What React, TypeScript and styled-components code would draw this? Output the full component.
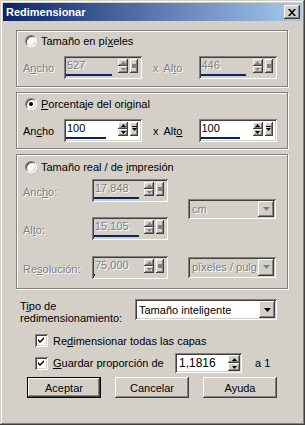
import React from 'react';
import styled, { createGlobalStyle, css } from 'styled-components';

const GlobalStyle = createGlobalStyle`
  html, body { margin: 0; padding: 0; background: #D4D0C8; }
  body { font-family: "Liberation Sans", Arial, sans-serif; font-size: 11px; color: #000; }
  * { box-sizing: border-box; }
`;

const raised = css`
  background: #D4D0C8;
  box-shadow: inset -1px -1px #404040, inset 1px 1px #fff, inset -2px -2px #808080, inset 2px 2px #D4D0C8;
`;

const sunken = css`
  box-shadow: inset 1px 1px #808080, inset -1px -1px #fff, inset 2px 2px #404040, inset -2px -2px #D4D0C8;
`;

const disabledText = css`
  color: #808080;
  text-shadow: 1px 1px 0 #fff;
`;

const Window = styled.div`
  width: 305px;
  height: 425px;
  padding: 3px;
  display: flex;
  flex-direction: column;
  background: #D4D0C8;
  box-shadow: inset -1px -1px #404040, inset 1px 1px #D4D0C8, inset -2px -2px #808080, inset 2px 2px #fff;
`;

const TitleBar = styled.div`
  height: 18px;
  display: flex;
  align-items: center;
  justify-content: space-between;
  padding: 0 2px 0 3px;
  background: linear-gradient(to right, #0A246A, #A6CAF0);
  color: #fff;
  font-weight: bold;
`;

const CloseBtn = styled.span`
  width: 16px;
  height: 14px;
  display: flex;
  align-items: center;
  justify-content: center;
  ${raised};
`;

const Body = styled.div`
  padding: 9px 14px 0 13px;
  display: flex;
  flex-direction: column;
  gap: 5px;
`;

const Group = styled.div<{ $pt: number; $pb: number }>`
  border: 1px solid #808080;
  box-shadow: inset 1px 1px #fff, 1px 1px #fff;
  padding: ${p => p.$pt}px 6px ${p => p.$pb}px 6px;
  display: flex;
  flex-direction: column;
`;

const RadioRow = styled.label`
  display: flex;
  align-items: center;
  gap: 4px;
  height: 13px;
  margin-left: 2px;
`;

const Radio = styled.span<{ $checked?: boolean }>`
  width: 12px;
  height: 12px;
  border-radius: 50%;
  background: #fff;
  border: 1px solid;
  border-color: #808080 #fff #fff #808080;
  box-shadow: inset 1px 1px #404040, inset -1px -1px #D4D0C8;
  display: flex;
  align-items: center;
  justify-content: center;
  &::after {
    content: '';
    width: 4px;
    height: 4px;
    border-radius: 50%;
    background: ${p => (p.$checked ? '#000' : 'transparent')};
  }
`;

const FieldRow = styled.div<{ $mt: number }>`
  display: flex;
  align-items: center;
  margin-top: ${p => p.$mt}px;
`;

const Label = styled.span<{ $w?: number; $disabled?: boolean }>`
  width: ${p => (p.$w ? `${p.$w}px` : 'auto')};
  flex: none;
  white-space: nowrap;
  ${p => p.$disabled && disabledText};
`;

const Times = styled.span<{ $disabled?: boolean }>`
  margin: 0 5px 0 11px;
  ${p => p.$disabled && disabledText};
`;

const SpinBox = styled.div<{ $w: number; $disabled?: boolean }>`
  width: ${p => p.$w}px;
  height: 23px;
  flex: none;
  padding: 2px 4px 2px 2px;
  background: ${p => (p.$disabled ? '#D4D0C8' : '#fff')};
  ${sunken};
  display: flex;
  gap: 2px;
`;

const SpinMain = styled.div`
  flex: 1;
  display: flex;
  flex-direction: column;
`;

const SpinText = styled.span<{ $disabled?: boolean }>`
  padding: 1px 0 0 1px;
  line-height: 12px;
  ${p => p.$disabled && disabledText};
`;

const Track = styled.div`
  margin-top: auto;
  margin-bottom: 1px;
  height: 2px;
`;

const Fill = styled.div`
  height: 100%;
  background: #0A246A;
`;

const SpinCol = styled.div<{ $full?: boolean }>`
  width: ${p => (p.$full ? 12 : 10)}px;
  display: flex;
  flex-direction: column;
  margin: ${p => (p.$full ? '0' : '1px 0 4px')};
`;

const SpinBtn = styled.span`
  flex: 1;
  display: flex;
  align-items: center;
  justify-content: center;
  ${raised};
`;

const MenuBtn = styled.span`
  width: 8px;
  margin: 1px 0 4px;
  display: flex;
  align-items: center;
  justify-content: center;
  ${raised};
`;

const Combo = styled.div<{ $w: number; $h: number; $disabled?: boolean }>`
  width: ${p => p.$w}px;
  height: ${p => p.$h}px;
  flex: none;
  padding: 2px;
  background: ${p => (p.$disabled ? '#D4D0C8' : '#fff')};
  ${sunken};
  display: flex;
  align-items: center;
`;

const ComboText = styled.span<{ $disabled?: boolean }>`
  flex: 1;
  min-width: 0;
  padding-left: 2px;
  white-space: nowrap;
  overflow: hidden;
  ${p => p.$disabled && disabledText};
`;

const DropBtn = styled.span`
  width: 16px;
  height: 100%;
  flex: none;
  display: flex;
  align-items: center;
  justify-content: center;
  ${raised};
`;

const SizeGrid = styled.div`
  display: grid;
  grid-template-columns: 69px 76px 20px 88px;
  grid-template-rows: 22px 16px 22px 17px 22px;
  margin-top: 6px;
`;

const GridLabel = styled(Label)<{ $row: number }>`
  grid-column: 1;
  grid-row: ${p => p.$row};
  align-self: center;
  padding-top: 4px;
`;

const GridCell = styled.div<{ $col: number; $row: string }>`
  grid-column: ${p => p.$col};
  grid-row: ${p => p.$row};
  align-self: center;
`;

const Bottom = styled.div`
  padding: 10px 0 0 17px;
  display: flex;
  flex-direction: column;
`;

const TypeRow = styled.div`
  display: flex;
  align-items: flex-start;
`;

const TypeLabel = styled.span`
  width: 115px;
  line-height: 12px;
  padding-top: 1px;
`;

const CheckRow = styled.label<{ $mt: number; $h: number }>`
  display: flex;
  align-items: center;
  gap: 5px;
  height: ${p => p.$h}px;
  margin: ${p => p.$mt}px 0 0 15px;
`;

const CheckBox = styled.span`
  width: 13px;
  height: 13px;
  flex: none;
  background: #fff;
  ${sunken};
  display: flex;
  align-items: center;
  justify-content: center;
`;

const RatioBox = styled.div`
  width: 67px;
  height: 20px;
  padding: 2px;
  background: #fff;
  ${sunken};
  display: flex;
`;

const RatioText = styled.span`
  flex: 1;
  padding: 1px 0 0 2px;
  font-size: 12px;
`;

const Suffix = styled.span`
  margin-left: 8px;
`;

const ButtonRow = styled.div`
  display: flex;
  gap: 14px;
  margin: 4px 0 0 7px;
`;

const Button = styled.button<{ $default?: boolean }>`
  width: 74px;
  height: 21px;
  font: inherit;
  color: #000;
  padding: 0;
  border: ${p => (p.$default ? '1px solid #000' : 'none')};
  ${raised};
`;

const UpArrow = ({ color = '#000' }: { color?: string }) => (
  <svg width="5" height="3" viewBox="0 0 5 3"><polygon points="0,3 5,3 2.5,0" fill={color} /></svg>
);

const DownArrow = ({ color = '#000', w = 5 }: { color?: string; w?: number }) => (
  <svg width={w} height={Math.ceil(w / 2)} viewBox={`0 0 ${w} ${Math.ceil(w / 2)}`}>
    <polygon points={`0,0 ${w},0 ${w / 2},${Math.ceil(w / 2)}`} fill={color} />
  </svg>
);

const MenuGlyph = ({ disabled }: { disabled?: boolean }) =>
  disabled ? (
    <svg width="4" height="4"><rect width="4" height="4" fill="#808080" /></svg>
  ) : (
    <svg width="5" height="6" viewBox="0 0 5 6">
      <rect width="5" height="1" fill="#000" />
      <polygon points="0,2 5,2 2.5,5" fill="#000" />
    </svg>
  );

const Spin = ({ value, fill, w, disabled }: { value: string; fill: number; w: number; disabled?: boolean }) => {
  const c = disabled ? '#808080' : '#000';
  return (
    <SpinBox $w={w} $disabled={disabled}>
      <SpinMain>
        <SpinText $disabled={disabled}>{value}</SpinText>
        <Track>
          <Fill style={{ width: `${fill}%` }} />
        </Track>
      </SpinMain>
      <SpinCol>
        <SpinBtn><UpArrow color={c} /></SpinBtn>
        <SpinBtn><DownArrow color={c} /></SpinBtn>
      </SpinCol>
      <MenuBtn><MenuGlyph disabled={disabled} /></MenuBtn>
    </SpinBox>
  );
};

const Select = ({ text, w, h, disabled }: { text: string; w: number; h: number; disabled?: boolean }) => (
  <Combo $w={w} $h={h} $disabled={disabled}>
    <ComboText $disabled={disabled}>{text}</ComboText>
    <DropBtn><DownArrow color={disabled ? '#808080' : '#000'} w={7} /></DropBtn>
  </Combo>
);

const Check = () => (
  <CheckBox>
    <svg width="7" height="7" viewBox="0 0 7 7">
      <path d="M0 2 L2 4 L6 0 L6 2 L2 6 L0 4 Z" fill="#000" />
    </svg>
  </CheckBox>
);

export default function App() {
  return (
    <>
      <GlobalStyle />
      <Window>
        <TitleBar>
          <span>Redimensionar</span>
          <CloseBtn>
            <svg width="8" height="7" viewBox="0 0 8 7">
              <path d="M0 0 L2 0 L4 2.5 L6 0 L8 0 L5 3.5 L8 7 L6 7 L4 4.5 L2 7 L0 7 L3 3.5 Z" fill="#000" />
            </svg>
          </CloseBtn>
        </TitleBar>
        <Body>
          <Group $pt={3} $pb={7}>
            <RadioRow><Radio /><span>Tamaño en pí<u>x</u>eles</span></RadioRow>
            <FieldRow $mt={9}>
              <Label $w={41} $disabled>A<u>n</u>cho</Label>
              <Spin value="527" fill={92} w={78} disabled />
              <Times $disabled>x</Times>
              <Label $w={35} $disabled>Al<u>t</u>o</Label>
              <Spin value="446" fill={90} w={78} disabled />
            </FieldRow>
          </Group>
          <Group $pt={4} $pb={6}>
            <RadioRow><Radio $checked /><span><u>P</u>orcentaje del original</span></RadioRow>
            <FieldRow $mt={9}>
              <Label $w={41}>An<u>c</u>ho</Label>
              <Spin value="100" fill={80} w={78} />
              <Times>x</Times>
              <Label $w={35}>Alt<u>o</u></Label>
              <Spin value="100" fill={78} w={78} />
            </FieldRow>
          </Group>
          <Group $pt={5} $pb={10}>
            <RadioRow><Radio /><span>Tamaño real / de <u>i</u>mpresión</span></RadioRow>
            <SizeGrid>
              <GridLabel $row={1} $disabled>Anc<u>h</u>o:</GridLabel>
              <GridCell $col={2} $row="1"><Spin value="17,848" fill={94} w={76} disabled /></GridCell>
              <GridCell $col={4} $row="1 / 4"><Select text="cm" w={88} h={20} disabled /></GridCell>
              <GridLabel $row={3} $disabled>Al<u>t</u>o:</GridLabel>
              <GridCell $col={2} $row="3"><Spin value="15,105" fill={94} w={76} disabled /></GridCell>
              <GridLabel $row={5} $disabled>Re<u>s</u>olución:</GridLabel>
              <GridCell $col={2} $row="5"><Spin value="75,000" fill={2} w={76} disabled /></GridCell>
              <GridCell $col={4} $row="5"><Select text="píxeles / pulg." w={88} h={21} disabled /></GridCell>
            </SizeGrid>
          </Group>
        </Body>
        <Bottom>
          <TypeRow>
            <TypeLabel>T<u>i</u>po de<br />redimensionamiento:</TypeLabel>
            <Select text="Tamaño inteligente" w={142} h={21} />
          </TypeRow>
          <CheckRow $mt={10} $h={13}>
            <Check />
            <span>Re<u>d</u>imensionar todas las capas</span>
          </CheckRow>
          <CheckRow $mt={6} $h={20}>
            <Check />
            <Label $w={117}><u>G</u>uardar proporción de</Label>
            <RatioBox>
              <RatioText>1,1816</RatioText>
              <SpinCol $full>
                <SpinBtn><UpArrow /></SpinBtn>
                <SpinBtn><DownArrow /></SpinBtn>
              </SpinCol>
            </RatioBox>
            <Suffix>a 1</Suffix>
          </CheckRow>
          <ButtonRow>
            <Button $default>Aceptar</Button>
            <Button>Cancelar</Button>
            <Button>Ayuda</Button>
          </ButtonRow>
        </Bottom>
      </Window>
    </>
  );
}
